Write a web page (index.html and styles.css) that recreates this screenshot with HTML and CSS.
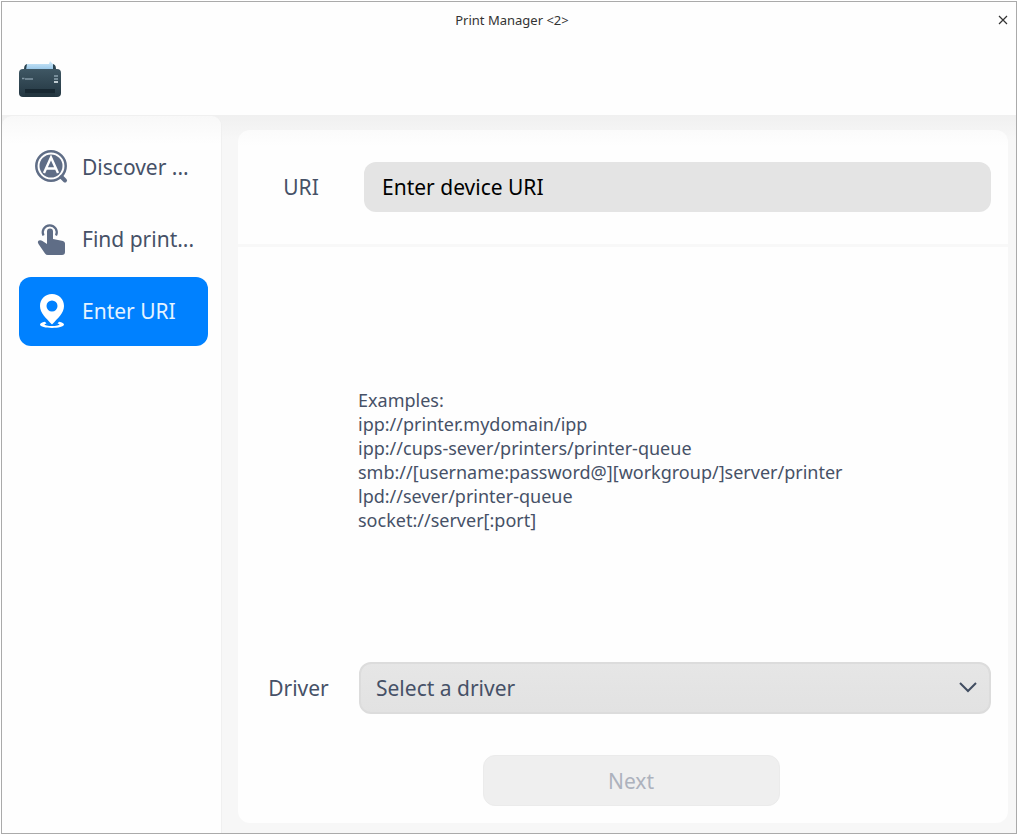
FILE: index.html
```html
<!DOCTYPE html>
<html lang="en">
<head>
<meta charset="utf-8">
<meta name="viewport" content="width=device-width, initial-scale=1">
<title>Print Manager</title>
<link rel="stylesheet" href="styles.css">
</head>
<body>
<div class="window">
  <header class="titlebar">
    <h1 class="title">Print Manager &lt;2&gt;</h1>
    <button class="close" type="button" aria-label="Close">
      <svg width="10" height="10" viewBox="0 0 10 10" fill="none" stroke="#333" stroke-width="1.2"><path d="M1 1l8 8M9 1l-8 8"/></svg>
    </button>
  </header>
  <div class="toolbar">
    <svg class="logo" width="44" height="40" viewBox="0 0 44 40" aria-hidden="true">
      <defs>
        <linearGradient id="body" x1="0" y1="0" x2="0" y2="1"><stop offset="0" stop-color="#3f5764"/><stop offset="1" stop-color="#233641"/></linearGradient>
        <linearGradient id="paper" x1="0" y1="0" x2="0" y2="1"><stop offset="0" stop-color="#d3ecfb"/><stop offset="1" stop-color="#94c4e6"/></linearGradient>
      </defs>
      <path d="M6 9q0-5 4-5h24q4 0 4 5v3H6z" fill="#2a4350"/>
      <path d="M9 4h22l1-3 3 3v6H8z" fill="url(#paper)"/>
      <rect x="1" y="9" width="42" height="28" rx="4" fill="url(#body)"/>
      <path d="M7 29h30v8H7z" fill="#172731"/>
      <path d="M7 33h30v4H7z" fill="#22353f"/>
      <path d="M4 18.500h2.500M7 19h8" stroke="#8298a5" stroke-width="1.400"/>
      <path d="M36 16h4M36 19h4" stroke="#8ca2ae" stroke-width="1.400"/>
      <path d="M36 22h4" stroke="#e4edf1" stroke-width="1.600"/>
    </svg>
  </div>
  <div class="body">
    <nav class="sidebar">
      <button class="item" type="button">
        <svg width="34" height="34" viewBox="0 0 34 34" aria-hidden="true">
          <circle cx="16" cy="16" r="14.700" fill="none" stroke="#5f6d86" stroke-width="2.500"/>
          <circle cx="16" cy="16" r="11.500" fill="#5f6d86"/>
          <path d="M9 23L16 7.500 23 23M11.500 18.500h9" fill="none" stroke="#fff" stroke-width="2.400"/>
          <path d="M26.500 27l3.500 3.500" stroke="#5f6d86" stroke-width="4" stroke-linecap="round"/>
        </svg>
        <span>Discover ...</span>
      </button>
      <button class="item" type="button">
        <svg width="34" height="34" viewBox="0 0 34 34" aria-hidden="true">
          <path d="M8.500 13.500a7 7 0 1 1 12.500 0" fill="none" stroke="#5f6d86" stroke-width="2.200"/>
          <path d="M12 9.500a3 3 0 0 1 6 0V17l10 2q2 .5 2 2.500V30q0 3-3 3H13q-2 0-3-1.500L3.500 22q-1.500-2.500.5-3.500 1.500-.8 3.500.5L12 22z" fill="#5f6d86"/>
        </svg>
        <span>Find print...</span>
      </button>
      <button class="item active" type="button" aria-current="page">
        <svg width="34" height="34" viewBox="0 0 34 34" aria-hidden="true">
          <path fill="#fff" fill-rule="evenodd" d="M17 0C10 0 5 5 5 12c0 7 6 12 12 18.500C23 24 29 19 29 12 29 5 24 0 17 0zm0 6.500a5.500 5.500 0 1 0 0 11 5.500 5.500 0 0 0 0-11z"/>
          <path fill="#fff" d="M10 27.800q-5 1-5 2.800c0 2.200 6 3.400 12 3.400s12-1.200 12-3.400q0-1.800-5-2.800l-1.500 1.700q2 .4 2 1c0 .8-3.500 1.500-7.500 1.500s-7.500-.7-7.500-1.500q0-.6 2-1z"/>
        </svg>
        <span>Enter URI</span>
      </button>
    </nav>
    <main class="content">
      <form class="card">
        <div class="row uri-row">
          <label class="label" for="uri">URI</label>
          <input class="uri" id="uri" type="text" placeholder="Enter device URI">
        </div>
        <div class="examples">
          <p>Examples:<br>ipp://printer.mydomain/ipp<br>ipp://cups-sever/printers/printer-queue<br>smb://[username:password@][workgroup/]server/printer<br>lpd://sever/printer-queue<br>socket://server[:port]</p>
        </div>
        <div class="row">
          <label class="label" for="driver">Driver</label>
          <div class="picker">
            <select class="driver" id="driver"><option>Select a driver</option></select>
            <svg class="chevron" width="20" height="12" viewBox="0 0 20 12" fill="none" stroke="#414d61" stroke-width="2" aria-hidden="true"><path d="M2 1l8 8 8-8"/></svg>
          </div>
        </div>
        <div class="actions"><button class="next" type="button" disabled>Next</button></div>
      </form>
    </main>
  </div>
</div>
</body>
</html>
```
FILE: styles.css
```css
* {
  box-sizing: border-box;
}

body {
  margin: 0;
  padding: 1px 4px 4px 1px;
  min-height: 100vh;
  display: flex;
  background: #fff;
  color: #465167;
  font: 21px/28px "Noto Sans", sans-serif;
}

button,
input,
select {
  font: inherit;
  color: inherit;
  border: 0;
}

.window {
  flex: 1;
  display: flex;
  flex-direction: column;
  border: 1px solid #aaa;
  background: #fefefe;
}

.titlebar {
  display: grid;
  grid-template-columns: 32px 1fr 26px;
  align-items: center;
  height: 36px;
}

.title {
  grid-column: 2;
  margin: 0;
  text-align: center;
  font-size: 13px;
  line-height: 20px;
  font-weight: 400;
  color: #333;
}

.close {
  display: flex;
  justify-content: center;
  padding: 8px;
  background: none;
}

.toolbar {
  height: 77px;
  padding: 22px 16px 0;
}

.logo {
  display: block;
}

.body {
  flex: 1;
  display: flex;
  background: linear-gradient(#f0f0f0, #f7f7f7 24px);
}

.sidebar {
  width: 220px;
  flex: none;
  display: flex;
  flex-direction: column;
  gap: 3px;
  padding: 17px 13px 16px 17px;
  border: 1px solid #f0f0f0;
  border-width: 1px 1px 0 0;
  border-radius: 10px 10px 0 0;
  background: linear-gradient(#f8f8f8, #fefefe 28px);
}

.item {
  display: flex;
  align-items: center;
  gap: 13px;
  height: 69px;
  padding: 0 14px 2px 16px;
  border-radius: 12px;
  background: none;
  white-space: nowrap;
  text-align: left;
}

.item svg {
  flex: none;
}

.active {
  background: #0081ff;
  color: #e5f3ff;
}

.content {
  flex: 1;
  display: flex;
  padding: 15px 8px 10px 16px;
}

.card {
  flex: 1;
  display: flex;
  flex-direction: column;
  padding-bottom: 17px;
  border-radius: 12px;
  background: linear-gradient(#fbfbfb, #fefefe 16px);
}

.row {
  display: grid;
  grid-template-columns: 121px 1fr;
  align-items: center;
  padding-right: 17px;
}

.uri-row {
  grid-template-columns: 126px 1fr;
  padding-top: 32px;
  padding-bottom: 32px;
  border-bottom: 3px solid #f8f8f8;
}

.label {
  text-align: center;
}

.uri {
  width: 100%;
  height: 50px;
  padding: 0 18px;
  border-radius: 12px;
  background: #e4e4e4;
  color: #000;
}

.uri::placeholder {
  color: #000;
  opacity: 1;
}

.examples {
  flex: 1;
  display: flex;
  align-items: center;
  padding: 10px 16px 0 120px;
  font-size: 18px;
  line-height: 24px;
}

.examples p {
  margin: 0;
}

.picker {
  display: grid;
  align-items: center;
}

.driver {
  grid-area: 1 / 1;
  appearance: none;
  width: 100%;
  height: 52px;
  padding: 0 48px 0 15px;
  border: 2px solid #dcdcdc;
  border-radius: 12px;
  background: linear-gradient(#e6e6e6, #e2e2e2);
}

.chevron {
  grid-area: 1 / 1;
  justify-self: end;
  margin-right: 13px;
  pointer-events: none;
}

.actions {
  display: flex;
  justify-content: center;
  padding: 41px 0 0 16px;
}

.next {
  width: 297px;
  height: 51px;
  border: 1px solid #ebebeb;
  border-radius: 12px;
  background: #efefef;
  color: #adb2bd;
}
```
